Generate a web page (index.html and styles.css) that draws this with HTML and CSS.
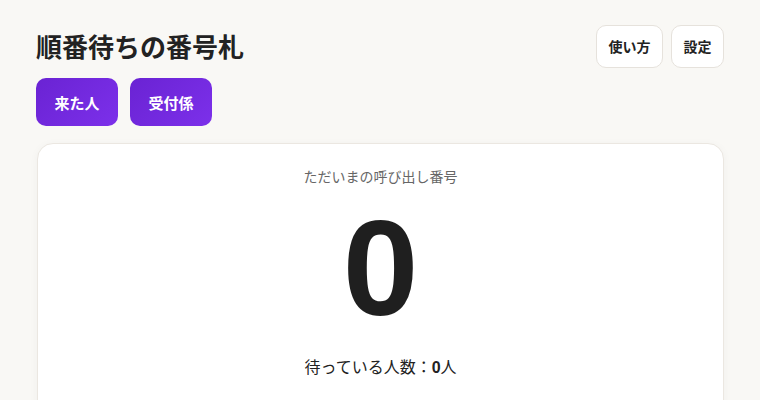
FILE: index.html
```html
<!DOCTYPE html>
<html lang="ja">
<head>
<meta charset="utf-8">
<title>順番待ちの番号札</title>
<link rel="stylesheet" href="styles.css">
</head>
<body>
<div class="page">
  <header class="header">
    <h1 class="title">順番待ちの番号札</h1>
    <div class="tools">
      <button class="tool">使い方</button>
      <button class="tool">設定</button>
    </div>
  </header>
  <nav class="modes">
    <button class="mode">来た人</button>
    <button class="mode">受付係</button>
  </nav>
  <section class="card">
    <p class="label">ただいまの呼び出し番号</p>
    <p class="number">0</p>
    <p class="waiting">待っている人数：<b>0</b>人</p>
  </section>
</div>
</body>
</html>
```
FILE: styles.css
```css
* { box-sizing: border-box; }
html, body { margin: 0; padding: 0; }
body {
  background: #f9f8f5;
  color: #222;
  font-family: "Noto Sans CJK JP", "Noto Sans", sans-serif;
  overflow: hidden;
}
.page {
  padding: 24px 36px 0 36px;
}
.header {
  display: flex;
  justify-content: space-between;
  align-items: center;
  height: 44px;
}
.title {
  margin: 0;
  font-size: 26px;
  font-weight: 700;
  color: #222;
  line-height: 1.2;
}
.tools {
  display: flex;
  gap: 8px;
}
.tool {
  height: 43px;
  padding: 0 11.5px;
  background: #fff;
  border: 1px solid #e6e2dc;
  border-radius: 10px;
  font-family: inherit;
  font-size: 14px;
  font-weight: 700;
  color: #222;
}
.modes {
  display: flex;
  gap: 12px;
  margin-top: 10px;
}
.mode {
  width: 82px;
  height: 48px;
  border: none;
  border-radius: 10px;
  background: linear-gradient(135deg, #6a23d3, #7c30ea);
  color: #fff;
  font-family: inherit;
  font-size: 15px;
  font-weight: 700;
}
.card {
  margin-top: 17px;
  margin-left: 1px;
  background: #fff;
  border: 1px solid #ebe7e1;
  border-radius: 16px;
  box-shadow: 0 2px 10px rgba(0,0,0,0.04);
  padding: 22px 20px 40px;
  text-align: center;
  height: 300px;
}
.label {
  margin: 0;
  font-size: 14px;
  line-height: 20px;
  color: #666;
}
.number {
  margin: 7px 0 0;
  font-family: "Liberation Sans", Arial, sans-serif;
  font-weight: 700;
  font-size: 136px;
  line-height: 150px;
  color: #1f1f1f;
}
.waiting {
  margin: 11px 0 0;
  font-size: 16px;
  line-height: 24px;
  color: #222;
}
.waiting b {
  font-family: "Liberation Sans", Arial, sans-serif;
}
```
